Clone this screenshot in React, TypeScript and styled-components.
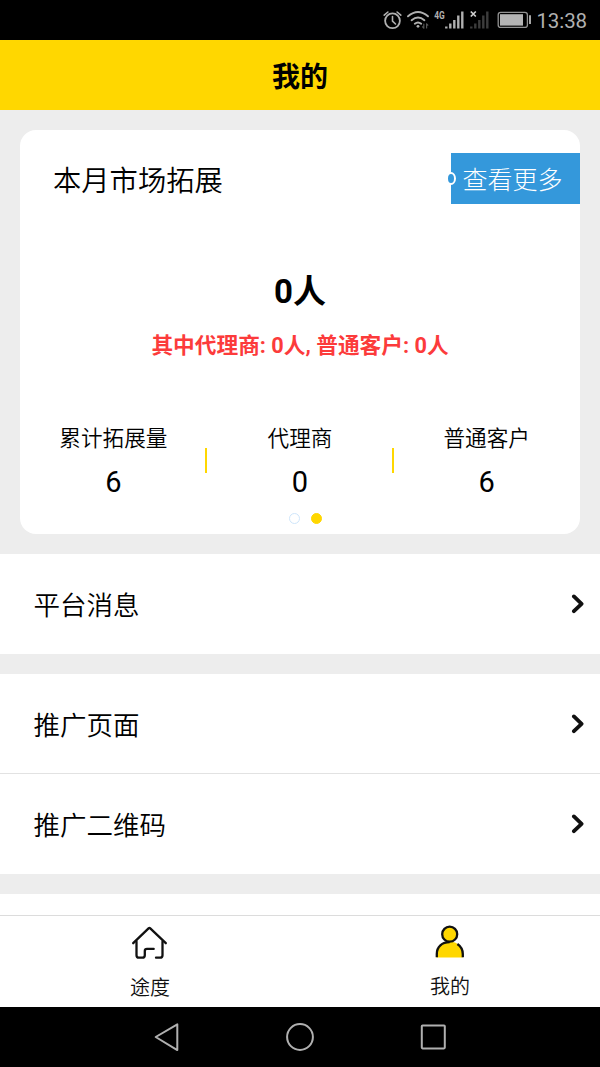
import React from 'react';
import styled, { createGlobalStyle } from 'styled-components';

const YELLOW = '#ffd700';

const GlobalStyle = createGlobalStyle`
  * { box-sizing: border-box; }
  body {
    margin: 0;
    background: #ededed;
    color: #000;
    font-family: Roboto, "Noto Sans CJK SC", sans-serif;
  }
  svg { display: block; flex: none; }
`;

const Screen = styled.div`
  display: flex;
  flex-direction: column;
  width: 600px;
  height: 1067px;
  overflow: hidden;
`;

const StatusBar = styled.div`
  flex: none;
  display: flex;
  align-items: center;
  justify-content: flex-end;
  height: 40px;
  padding-right: 13px;
  background: #000;
  color: #b0b0b0;
`;

const Clock = styled.span`
  margin-left: 4px;
  font-size: 20.5px;
  line-height: 40px;
  letter-spacing: -0.1px;
  padding-top: 1px;
`;

const Header = styled.header`
  flex: none;
  height: 70px;
  background: ${YELLOW};
  text-align: center;
  font-size: 28px;
  font-weight: 700;
  line-height: 76px;
`;

const Content = styled.main`
  flex: 1;
  min-height: 0;
  overflow: hidden;
  display: flex;
  flex-direction: column;
  gap: 20px;
  padding-top: 20px;
`;

const Card = styled.section`
  flex: none;
  display: flex;
  flex-direction: column;
  height: 404px;
  margin: 0 20px;
  padding-top: 23px;
  border-radius: 16px;
  background: #fff;
`;

const CardHead = styled.div`
  display: flex;
  align-items: center;
  justify-content: space-between;
  height: 51px;
  padding-left: 33px;
`;

const CardTitle = styled.h2`
  margin: 0;
  font-size: 28.3px;
  font-weight: 350;
  line-height: 51px;
  padding-top: 5px;
`;

const MoreButton = styled.div`
  position: relative;
  width: 129px;
  height: 51px;
  padding: 1px 0 0 11.5px;
  background: #3498db;
  color: #fff;
  font-size: 25px;
  font-weight: 300;
  line-height: 53px;
  white-space: nowrap;
`;

const Knob = styled.span`
  position: absolute;
  left: -5px;
  top: 19px;
  width: 10px;
  height: 13px;
  border: 2px solid #fff;
  border-radius: 50%;
  background: #3498db;
`;

const Total = styled.div`
  margin-top: 63px;
  height: 50px;
  text-align: center;
  font-size: 33px;
  font-weight: 700;
  line-height: 50px;
`;

const Breakdown = styled.div`
  margin-top: 13px;
  height: 32px;
  text-align: center;
  color: #fc3b3b;
  font-size: 21.7px;
  font-weight: 700;
  line-height: 32px;
`;

const Stats = styled.div`
  display: flex;
  margin-top: 60px;
  height: 88px;
`;

const Stat = styled.div`
  flex: 1;
  display: flex;
  flex-direction: column;
  align-items: center;
  position: relative;

  & + &::before {
    content: '';
    position: absolute;
    left: -1.7px;
    top: 26px;
    width: 2px;
    height: 25px;
    background: ${YELLOW};
  }
`;

const StatLabel = styled.span`
  margin-top: 1px;
  font-size: 21.6px;
  font-weight: 350;
  line-height: 32px;
`;

const StatValue = styled.span`
  margin-top: 8px;
  font-size: 29px;
  line-height: 38px;
`;

const Dots = styled.div`
  display: flex;
  justify-content: center;
  gap: 11px;
  padding-left: 10px;
  margin-top: 3px;
`;

const Dot = styled.i<{ $active?: boolean }>`
  width: 11px;
  height: 11px;
  border-radius: 50%;
  border: 1px solid ${(p) => (p.$active ? YELLOW : '#cfe6fb')};
  background: ${(p) => (p.$active ? YELLOW : '#fff')};
`;

const List = styled.ul`
  flex: none;
  margin: 0;
  padding: 0;
  list-style: none;
  background: #fff;
`;

const Item = styled.li`
  display: flex;
  align-items: center;
  justify-content: space-between;
  height: 100px;
  padding: 0 15px 0 33.5px;
  font-size: 26.5px;
  font-weight: 350;
  line-height: 40px;

  &:not(:last-child) { border-bottom: 1px solid #e2e2e2; }
`;

const ItemLabel = styled.span`
  padding-top: 4px;
`;

const TabBar = styled.nav`
  flex: none;
  display: flex;
  height: 92px;
  border-top: 1px solid #dcdcdc;
  background: #fff;
`;

const Tab = styled.div`
  flex: 1;
  display: flex;
  flex-direction: column;
  align-items: center;
  padding-top: 7px;
  font-size: 20px;
  font-weight: 350;
  line-height: 30px;
  color: #111;
`;

const TabLabel = styled.span<{ $raised?: boolean }>`
  margin-top: ${(p) => (p.$raised ? 9 : 10)}px;
`;

const SystemNav = styled.div`
  flex: none;
  display: flex;
  justify-content: center;
  height: 60px;
  background: #000;
`;

const StatusIcons = () => (
  <svg width="150" height="40" viewBox="382 0 150 40" fill="none" stroke="#b0b0b0" strokeLinecap="round">
    <circle cx="392.5" cy="20.8" r="7.4" strokeWidth="1.8" />
    <path d="M392.5 16.5v4.7l3 2.8M384.2 15.2l3.7-3.2M400.8 15.2l-3.7-3.2" strokeWidth="1.6" />
    <path d="M408 16.3q10-8.6 20 0M411.6 20.2q6.4-5.4 12.8 0M414.8 23.7q3.2-2.6 6.4 0" strokeWidth="1.9" />
    <circle cx="418" cy="26.3" r="1.4" fill="#b0b0b0" stroke="none" />
    <path d="M423.8 24v4.2M422.6 26.8l1.2 1.4M426.6 28v-4.2M427.8 25.2l-1.2-1.4" stroke="#555" strokeWidth="1.2" />
    <text x="434.3" y="19.2" fill="#b0b0b0" stroke="none" fontFamily="Roboto, sans-serif" fontSize="11.5" fontWeight="700" textLength="10.5" lengthAdjust="spacingAndGlyphs">4G</text>
    <path d="M446.3 28.5v-2M450.3 28.5v-5M454.3 28.5v-8.5M458.3 28.5v-13M462.3 28.5v-17" strokeWidth="2.4" strokeLinecap="butt" />
    <path d="M471.3 28.5v-2M475.3 28.5v-5M479.3 28.5v-8.5M483.3 28.5v-13M487.3 28.5v-17" stroke="#3c3c3c" strokeWidth="2.4" strokeLinecap="butt" />
    <path d="M470.8 11.5l5 5M475.8 11.5l-5 5" stroke="#d0d0d0" strokeWidth="1.7" strokeLinecap="butt" />
    <rect x="498.2" y="12.4" width="29.2" height="15" rx="2.5" stroke="#929292" strokeWidth="1.3" />
    <rect x="500" y="14.2" width="23" height="11.4" fill="#b4b4b4" stroke="none" />
    <path d="M530 15.3v8.6" strokeWidth="1.9" strokeLinecap="butt" />
  </svg>
);

const Chevron = () => (
  <svg width="14" height="20" viewBox="0 0 14 20" fill="none" stroke="#111" strokeWidth="3.8" strokeLinecap="round" strokeLinejoin="round">
    <path d="M2.9 2.4L10.6 9.8L2.9 17.2" />
  </svg>
);

const HomeIcon = () => (
  <svg width="40" height="40" viewBox="0 0 40 40" fill="none" stroke="#111" strokeWidth="2.3" strokeLinecap="round" strokeLinejoin="round">
    <path d="M3.2 20.2L18.8 5.2Q19.4 4.7 20 5.2L35.8 20.2" />
    <path d="M6.5 18.5V32.2Q6.5 34.7 9 34.7H12.3Q14.8 34.7 14.8 32.2V28Q14.8 25.9 17 25.9H23.7" />
    <path d="M32.5 18.5V32.2Q32.5 34.7 30 34.7H26" />
  </svg>
);

const PersonIcon = () => (
  <svg width="40" height="40" viewBox="0 0 40 40" fill="none" stroke="#111" strokeWidth="2.3">
    <path d="M6.5 34.4V31C6.5 23.5 12 18.8 19.7 18.8C27.5 18.8 32.8 23.5 32.8 31V34.4Z" fill={YELLOW} stroke="none" />
    <path d="M6.8 34.2V31C6.8 23.5 12 19.2 19.7 19.2M27.4 21C31 23.5 32.8 27 32.8 31V34.2" />
    <circle cx="19.7" cy="11.2" r="7.5" fill={YELLOW} />
  </svg>
);

const SystemKeys = () => (
  <svg width="600" height="60" viewBox="0 0 600 60" fill="none" stroke="#b0b0b0" strokeWidth="2" strokeLinejoin="round">
    <path d="M155.7 30L177.3 17.3V43.1Z" />
    <circle cx="300" cy="30" r="12.9" />
    <rect x="421.8" y="18.4" width="23" height="23" rx="0.8" />
  </svg>
);

const stats = [
  { label: '累计拓展量', value: 6 },
  { label: '代理商', value: 0 },
  { label: '普通客户', value: 6 },
];

const groups = [['平台消息'], ['推广页面', '推广二维码']];

export default function App() {
  return (
    <Screen>
      <GlobalStyle />
      <StatusBar>
        <StatusIcons />
        <Clock>13:38</Clock>
      </StatusBar>
      <Header>我的</Header>
      <Content>
        <Card>
          <CardHead>
            <CardTitle>本月市场拓展</CardTitle>
            <MoreButton><Knob />查看更多</MoreButton>
          </CardHead>
          <Total>0人</Total>
          <Breakdown>其中代理商: 0人, 普通客户: 0人</Breakdown>
          <Stats>
            {stats.map((s) => (
              <Stat key={s.label}>
                <StatLabel>{s.label}</StatLabel>
                <StatValue>{s.value}</StatValue>
              </Stat>
            ))}
          </Stats>
          <Dots><Dot /><Dot $active /></Dots>
        </Card>
        {groups.map((items) => (
          <List key={items[0]}>
            {items.map((label) => (
              <Item key={label}><ItemLabel>{label}</ItemLabel><Chevron /></Item>
            ))}
          </List>
        ))}
        <List><Item /></List>
      </Content>
      <TabBar>
        <Tab><HomeIcon /><TabLabel>途度</TabLabel></Tab>
        <Tab><PersonIcon /><TabLabel $raised>我的</TabLabel></Tab>
      </TabBar>
      <SystemNav><SystemKeys /></SystemNav>
    </Screen>
  );
}
